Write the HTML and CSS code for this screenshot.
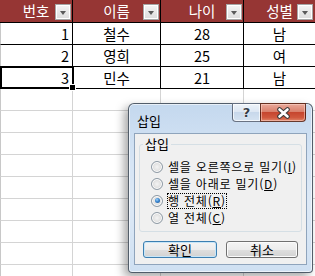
FILE: index.html
```html
<!DOCTYPE html>
<html lang="ko">
<head>
<meta charset="utf-8">
<title>삽입</title>
<link rel="stylesheet" href="styles.css">
</head>
<body>
<div class="sheet">
  <div class="row head">
    <div class="cell c1">번호<i class="dd"></i></div>
    <div class="cell c2">이름<i class="dd"></i></div>
    <div class="cell c3">나이<i class="dd"></i></div>
    <div class="cell c4">성별<i class="dd"></i></div>
  </div>
  <div class="row">
    <div class="cell c1 num">1</div>
    <div class="cell c2">철수</div>
    <div class="cell c3">28</div>
    <div class="cell c4">남</div>
  </div>
  <div class="row">
    <div class="cell c1 num">2</div>
    <div class="cell c2">영희</div>
    <div class="cell c3">25</div>
    <div class="cell c4">여</div>
  </div>
  <div class="row">
    <div class="cell c1 num">3</div>
    <div class="cell c2">민수</div>
    <div class="cell c3">21</div>
    <div class="cell c4">남</div>
  </div>
  <div class="row empty"><div class="cell c1"></div><div class="cell c2"></div><div class="cell c3"></div><div class="cell c4"></div></div>
  <div class="row empty"><div class="cell c1"></div><div class="cell c2"></div><div class="cell c3"></div><div class="cell c4"></div></div>
  <div class="row empty"><div class="cell c1"></div><div class="cell c2"></div><div class="cell c3"></div><div class="cell c4"></div></div>
  <div class="row empty"><div class="cell c1"></div><div class="cell c2"></div><div class="cell c3"></div><div class="cell c4"></div></div>
  <div class="row empty"><div class="cell c1"></div><div class="cell c2"></div><div class="cell c3"></div><div class="cell c4"></div></div>
  <div class="row empty"><div class="cell c1"></div><div class="cell c2"></div><div class="cell c3"></div><div class="cell c4"></div></div>
  <div class="row empty"><div class="cell c1"></div><div class="cell c2"></div><div class="cell c3"></div><div class="cell c4"></div></div>
  <div class="row empty"><div class="cell c1"></div><div class="cell c2"></div><div class="cell c3"></div><div class="cell c4"></div></div>
  <div class="row empty"><div class="cell c1"></div><div class="cell c2"></div><div class="cell c3"></div><div class="cell c4"></div></div>
  <div class="sel"><i class="handle"></i></div>
</div>

<div class="dialog">
  <div class="titlebar">
    <span class="title">삽입</span>
    <div class="caption">
      <span class="help">?</span>
      <span class="close">
        <svg width="15" height="12" viewBox="0 0 15 12">
          <path d="M3.5 2.5 L11.5 9.5 M11.5 2.5 L3.5 9.5" stroke="#3a3a3a" stroke-width="4.6" stroke-linecap="round"/>
          <path d="M3.5 2.5 L11.5 9.5 M11.5 2.5 L3.5 9.5" stroke="#ffffff" stroke-width="2.6" stroke-linecap="round"/>
        </svg>
      </span>
    </div>
  </div>
  <div class="client">
    <fieldset class="group">
      <legend>삽입</legend>
      <div class="opt"><span class="radio"></span><span>셀을 오른쪽으로 밀기(<u>I</u>)</span></div>
      <div class="opt"><span class="radio"></span><span>셀을 아래로 밀기(<u>D</u>)</span></div>
      <div class="opt"><span class="radio on"></span><span class="focus">행 전체(<u>R</u>)</span></div>
      <div class="opt"><span class="radio"></span><span>열 전체(<u>C</u>)</span></div>
    </fieldset>
    <div class="buttons">
      <span class="btn ok">확인</span>
      <span class="btn cancel">취소</span>
    </div>
  </div>
</div>
</body>
</html>
```

FILE: styles.css
```css
html, body {
  margin: 0;
  padding: 0;
  background: #ffffff;
  overflow: hidden;
}

.sheet {
  position: relative;
  font-family: "Noto Sans CJK KR", "Noto Sans", sans-serif;
  font-size: 14.5px;
  color: #000;
}

.row {
  display: flex;
  height: 22px;
}

.row.head {
  height: 23px;
  background: #963634;
  color: #ffffff;
}

.cell {
  position: relative;
  box-sizing: border-box;
  border-right: 1px solid #000;
  border-bottom: 1px solid #000;
  display: flex;
  align-items: center;
  justify-content: center;
  line-height: 16px;
}

.c1 { width: 73px; border-left: 1px solid #c8c8c8; }
.head .c1 { border-left: none; }
.c2 { width: 88px; }
.c3 { width: 83px; }
.c4 { flex: 1; border-right: none; }

.num {
  justify-content: flex-end;
  padding-right: 3px;
}

.empty .cell {
  border-right-color: #d4d4d4;
  border-bottom-color: #d4d4d4;
}

.dd {
  position: absolute;
  right: 1px;
  top: 4px;
  width: 16px;
  height: 16px;
  box-sizing: border-box;
  border: 1px solid #a6a6a6;
  box-shadow: inset 0 0 0 1px #ffffff;
  background: linear-gradient(#f4f4f4, #dcdcdc);
}
.c4 .dd { right: 2px; }

.dd::after {
  content: "";
  position: absolute;
  left: 4px;
  top: 6px;
  border-left: 3.5px solid transparent;
  border-right: 3.5px solid transparent;
  border-top: 4px solid #5a5a5a;
}

.sel {
  position: absolute;
  left: 0;
  top: 66px;
  width: 74px;
  height: 23px;
  box-sizing: border-box;
  border: 2px solid #000;
}

.handle {
  position: absolute;
  right: -4px;
  bottom: -4px;
  width: 5px;
  height: 5px;
  background: #000;
  border: 1px solid #fff;
}

/* dialog */
.dialog {
  position: absolute;
  left: 128px;
  top: 103px;
  width: 185px;
  height: 170px;
  box-sizing: border-box;
  border: 1px solid rgba(40, 50, 60, 0.75);
  border-radius: 6px 6px 4px 4px;
  background: linear-gradient(180deg, #c4d8ee 0%, #d6e5f5 35%, #dde9f6 60%, #cfe0f2 100%);
  box-shadow: -4px 4px 10px rgba(0, 0, 0, 0.35), inset 0 0 0 1px rgba(255, 255, 255, 0.6);
  padding: 0 5px 7px 5px;
  display: flex;
  flex-direction: column;
  font-family: "Noto Sans CJK KR", "Noto Sans", sans-serif;
  font-size: 13px;
  color: #000;
}

.titlebar {
  height: 29px;
  display: flex;
  align-items: flex-start;
}

.title {
  margin-top: 9px;
  padding-left: 3px;
  line-height: 16px;
}

.caption {
  margin-left: auto;
  margin-top: -1px;
  margin-right: 1px;
  display: flex;
}

.help {
  width: 28px;
  height: 19px;
  box-sizing: border-box;
  border: 1px solid rgba(50, 60, 80, 0.7);
  border-right: none;
  border-radius: 0 0 0 4px;
  background: linear-gradient(180deg, #eef3f9 0%, #dde7f3 45%, #c8d8eb 50%, #d5e3f1 100%);
  box-shadow: inset 0 0 0 1px rgba(255, 255, 255, 0.7);
  display: flex;
  align-items: center;
  justify-content: center;
  font-family: "DejaVu Sans", sans-serif;
  font-weight: bold;
  font-size: 13px;
  color: #353c46;
  text-shadow: 0 0 2px #fff, 0 0 1px #fff;
  line-height: 13px;
}

.close {
  width: 46px;
  height: 19px;
  box-sizing: border-box;
  border: 1px solid rgba(60, 20, 10, 0.75);
  border-radius: 0 0 4px 0;
  background: linear-gradient(180deg, #e9a99a 0%, #d9806c 45%, #c6462f 50%, #d0583e 80%, #e0866a 100%);
  box-shadow: inset 0 0 0 1px rgba(255, 220, 210, 0.5);
  display: flex;
  align-items: center;
  justify-content: center;
}

.client {
  flex: 1;
  background: #f0f0f0;
  border: 1px solid #8fa4bc;
  display: flex;
  flex-direction: column;
}

.group {
  margin: 3px 4px 0 4px;
  padding: 7px 0 5px 11px;
  border: 1px solid #d5dfe5;
  border-radius: 3px;
  min-width: 0;
}

.group legend {
  margin-left: -8px;
  padding: 0 2px;
  line-height: 14px;
}

.opt {
  display: flex;
  align-items: center;
  height: 17px;
  gap: 5px;
  white-space: nowrap;
  line-height: 14px;
  font-size: 12px;
  letter-spacing: 0.8px;
}

.radio {
  width: 12px;
  height: 12px;
  box-sizing: border-box;
  border-radius: 50%;
  border: 1px solid #8e9aa5;
  background: radial-gradient(circle at 50% 50%, #f4f4f4 0%, #dedede 60%, #c9c9c9 100%);
  box-shadow: inset 0 0 0 1px #ffffff;
  position: relative;
  flex: none;
}

.radio.on::after {
  content: "";
  position: absolute;
  left: 2.5px;
  top: 2.5px;
  width: 5px;
  height: 5px;
  border-radius: 50%;
  background: radial-gradient(circle at 40% 35%, #9fd4fb 0%, #3a86d0 45%, #1a4f8e 100%);
}

.focus {
  outline: 1px dotted #000;
  outline-offset: 0;
  letter-spacing: 0.8px;
}

.buttons {
  display: flex;
  gap: 9px;
  margin: 9px 0 0 8px;
}

.btn {
  height: 17px;
  box-sizing: border-box;
  border-radius: 3px;
  border: 1px solid #707070;
  background: linear-gradient(180deg, #f4f4f4 0%, #ececec 50%, #dfdfdf 50%, #d2d2d2 100%);
  box-shadow: inset 0 0 0 1px #fbfbfb;
  display: flex;
  align-items: center;
  justify-content: center;
  line-height: 14px;
}

.btn.ok {
  width: 74px;
  border-color: #3c7fb1;
  box-shadow: inset 0 0 0 1px #c8e6f8;
}

.btn.cancel {
  width: 72px;
}
```
